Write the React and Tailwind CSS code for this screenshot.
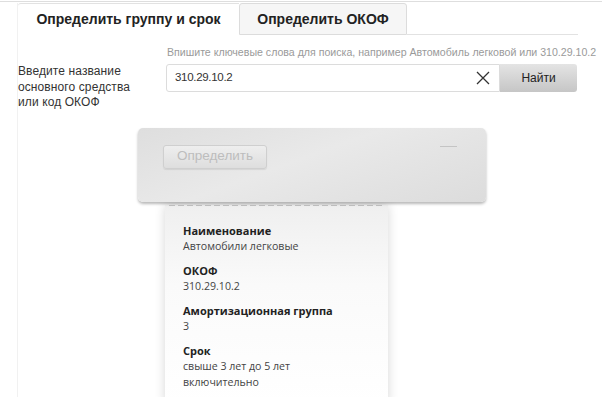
import React from 'react';

const fields = [
  { label: 'Наименование', value: ['Автомобили легковые'] },
  { label: 'ОКОФ', value: ['310.29.10.2'] },
  { label: 'Амортизационная группа', value: ['3'] },
  { label: 'Срок', value: ['свыше 3 лет до 5 лет', 'включительно'] },
];

const App = () => {
  return (
    <div className="w-[602px] h-[397px] overflow-hidden bg-white font-['Liberation_Sans',Arial,sans-serif] text-[#222]">
      <div className="h-px mt-px bg-[#dedede]" />
      <div className="ml-[17px] mt-px w-[561px] h-[394px] border-l border-[#f1f1f1]">
        {/* Tabs */}
        <div className="flex h-[32px]">
          <div className="w-[221px] border-t border-[#e2e2e2] rounded-tl-[3px] bg-white flex items-center justify-center text-[14px] font-bold">
            Определить группу и срок
          </div>
          <div className="w-[168px] border border-[#dcdcdc] rounded-t-[3px] bg-[#f6f6f6] flex items-center justify-center text-[14px] font-bold">
            Определить ОКОФ
          </div>
          <div className="flex-1 border-b border-[#e2e2e2]" />
        </div>

        {/* Search form */}
        <div className="grid grid-cols-[148px_411px] mt-[10px]">
          <div />
          <div className="text-[10.6px] leading-[14px] text-[#9a9a9a] whitespace-nowrap mb-[5px] pl-px">
            Впишите ключевые слова для поиска, например Автомобиль легковой или 310.29.10.2
          </div>
          <div className="text-[12px] leading-[15.5px] tracking-[0.1px] text-[#333]">
            Введите название
            <br />
            основного средства
            <br />
            или код ОКОФ
          </div>
          <div className="flex h-[28px]">
            <div className="w-[334px] flex items-center border border-[#dcdcdc] rounded-l-[3px] bg-white pl-[8px] pr-[9px]">
              <span className="flex-1 text-[11.5px] tracking-[-0.3px] text-[#333]">310.29.10.2</span>
              <svg width="14" height="14" viewBox="0 0 14 14" className="text-[#333]">
                <path d="M1 1L13 13M13 1L1 13" stroke="currentColor" strokeWidth="1.3" fill="none" />
              </svg>
            </div>
            <button className="w-[77px] rounded-r-[3px] bg-gradient-to-b from-[#e4e4e4] to-[#c6c6c6] text-[12px] text-[#222]">
              Найти
            </button>
          </div>
        </div>

        {/* Result device */}
        <div className="mt-[17px]">
          <div className="relative z-10 ml-[120px] w-[348px] h-[74px] rounded-[5px] bg-[linear-gradient(160deg,#dedede_0%,#e9e9e9_45%,#dcdcdc_100%)] shadow-[0_2px_3px_rgba(0,0,0,0.28)] pt-[17px] pl-[25px] flex items-start">
            <div className="w-[104px] h-[24px] rounded-[3px] border border-[#cfcfcf] bg-gradient-to-b from-[#eeeeee] to-[#dedede] shadow-[0_1px_1px_rgba(0,0,0,0.08)] flex items-center justify-center text-[13.5px] text-[#bdbdbd]">
              Определить
            </div>
            <div className="ml-[173px] mt-px w-[17px] h-px bg-[#c4c4c4]" />
          </div>
          <div className="ml-[147px] w-[223px] h-[200px] bg-gradient-to-b from-[#efefef] via-[#fafafa] via-40% to-white shadow-[0_0_10px_rgba(0,0,0,0.16)] font-['Open_Sans',sans-serif] text-[#333]">
            <div className="mx-[4px] mt-[3px] h-px bg-[repeating-linear-gradient(90deg,#c4c4c4_0px,#c4c4c4_6px,transparent_6px,transparent_9px)]" />
            <div className="pt-[18px] pl-[18px] flex flex-col gap-[10px]">
              {fields.map((f) => (
                <div key={f.label}>
                  <div className="text-[11px] leading-[14px] font-bold text-[#222]">{f.label}</div>
                  {f.value.map((v) => (
                    <div key={v} className="text-[10.6px] leading-[16px] text-[#444]">{v}</div>
                  ))}
                </div>
              ))}
            </div>
          </div>
        </div>
      </div>
    </div>
  );
};

export default App;
